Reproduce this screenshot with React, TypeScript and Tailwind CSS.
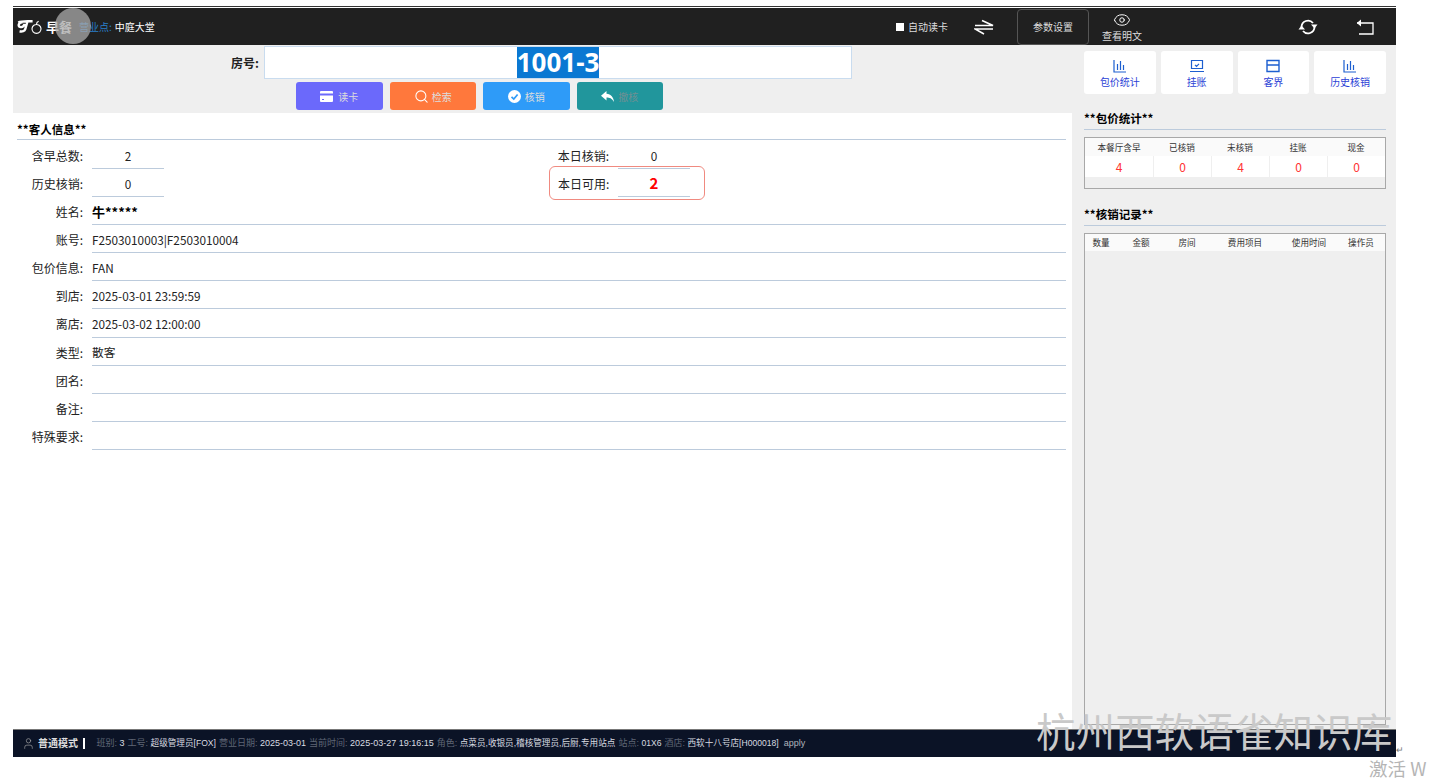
import { Eye, Search, User } from "lucide-react";

const font = "font-['Noto_Sans_CJK_SC','Noto_Sans',sans-serif]";

const infoRows = [
  { label: "账号:", value: "F2503010003|F2503010004" },
  { label: "包价信息:", value: "FAN" },
  { label: "到店:", value: "2025-03-01 23:59:59" },
  { label: "离店:", value: "2025-03-02 12:00:00" },
  { label: "类型:", value: "散客" },
  { label: "团名:", value: "" },
  { label: "备注:", value: "" },
  { label: "特殊要求:", value: "" },
];

const statusItems = [
  ["班别:", "3"],
  ["工号:", "超级管理员[FOX]"],
  ["营业日期:", "2025-03-01"],
  ["当前时间:", "2025-03-27 19:16:15"],
  ["角色:", "点菜员,收银员,稽核管理员,后厨,专用站点"],
  ["站点:", "01X6"],
  ["酒店:", "西软十八号店[H000018]"],
];

const BarsIcon = () => (
  <svg width="14" height="14" viewBox="0 0 14 14" fill="none" stroke="#1d5fd0" strokeWidth="1.2">
    <path d="M1 1v12h12M4.5 5v6M7.5 2v9M10.5 6v5" />
  </svg>
);

const LaptopIcon = () => (
  <svg width="16" height="14" viewBox="0 0 16 14" fill="none" stroke="#1d5fd0" strokeWidth="1.2">
    <path d="M2.5 1.5h11v8h-11zM1 12.5h14M6 5.8l1.5 1.5 2.5-2.5" />
  </svg>
);

const WindowIcon = () => (
  <svg width="14" height="14" viewBox="0 0 14 14" fill="none" stroke="#1d5fd0" strokeWidth="1.4">
    <path d="M1 1.5h12v11H1zM1 6h12" />
  </svg>
);

const tools = [
  { label: "包价统计", icon: <BarsIcon /> },
  { label: "挂账", icon: <LaptopIcon /> },
  { label: "客界", icon: <WindowIcon /> },
  { label: "历史核销", icon: <BarsIcon /> },
];

const stats = [
  { label: "本餐厅含早", value: "4" },
  { label: "已核销", value: "0" },
  { label: "未核销", value: "4" },
  { label: "挂账", value: "0" },
  { label: "现金", value: "0" },
];

const Logo = () => (
  <svg width="26" height="15" viewBox="0 0 30 16" fill="none" stroke="white">
    <path d="M1.500 3.500c4-2.200 10-1.500 16.500-1.500M6.500 3C2 3 .5 7.500 3.500 8.500c2.500.8 4.500-1 5.500-3.500M12 2.500 9.500 11c-.6 2.200-3.500 3.200-6.500 2.500" strokeWidth="2.800" />
    <path d="M19.500 6.500a5.200 5.200 0 1 0 6 0c-1.500-.8-4.500-.8-6 0zM22.500 5.500c0-2 1-3 2.500-3.500" strokeWidth="1.300" />
  </svg>
);

const SwapIcon = () => (
  <svg width="20" height="16" viewBox="0 0 20 16" fill="none" stroke="white" strokeWidth="1.600">
    <path d="M1 6.500h18L8 1.500M19 10H1l9 5" />
  </svg>
);

const RefreshIcon = () => (
  <svg width="20" height="18" viewBox="0 0 20 18" fill="none" stroke="white" strokeWidth="1.800">
    <path d="M3.500 9a6.500 6.500 0 0 1 11.500-4M16.500 9a6.500 6.500 0 0 1-11.500 4" />
    <path d="M13 6.500h6.500L16.500 10.500zM.5 11.500H7L3.500 7.500z" fill="white" stroke="none" />
  </svg>
);

const BackIcon = () => (
  <svg width="18" height="16" viewBox="0 0 18 16" fill="none" stroke="white" strokeWidth="1.300">
    <path d="M1 4h16v11H3" />
    <path d="M5 .5v7L.8 4z" fill="white" stroke="none" />
  </svg>
);

const CardIcon = () => (
  <svg width="13" height="11" viewBox="0 0 13 11" fill="white">
    <path d="M1 0h11a1 1 0 0 1 1 1v1.500H0V1a1 1 0 0 1 1-1zM0 4.500h13V10a1 1 0 0 1-1 1H1a1 1 0 0 1-1-1zM2 8v1h2V8z" fillRule="evenodd" />
  </svg>
);

const CheckIcon = () => (
  <svg width="13" height="13" viewBox="0 0 13 13">
    <circle cx="6.500" cy="6.500" r="6.500" fill="white" />
    <path d="M3.500 6.800 5.800 9l3.800-4.500" fill="none" stroke="#2e9bf8" strokeWidth="1.700" />
  </svg>
);

const ReplyIcon = () => (
  <svg width="13" height="11" viewBox="0 0 13 11" fill="white">
    <path d="M5.500 0 0 4.700 5.500 9.500V6.600c3 0 5.500.8 7.500 4.400-.5-4.800-3-8-7.500-8.300z" />
  </svg>
);

const SectionTitle = ({ children, className }: { children: string; className: string }) => (
  <div className={`border-b border-[#bccbdc] text-[11.5px] font-bold text-black ${className}`}>
    {children}
  </div>
);

const ShortRow = ({ label, value, width }: { label: string; value: string; width: string }) => (
  <div className="flex h-[28px] items-center">
    <span className={`${width} shrink-0 whitespace-nowrap pr-[9px] pt-[2px] text-right text-[12px] text-[#222]`}>{label}</span>
    <span className="flex h-[28px] w-[72px] items-center justify-center border-b border-[#bccbdc] pt-[2px] text-[11.75px] text-[#222]">
      {value}
    </span>
  </div>
);

const App = () => {
  return (
    <div className={`relative h-[779px] w-[1430px] overflow-hidden bg-white pl-[13px] pt-[6px] ${font}`}>
      <div className="flex h-[751px] w-[1383px] flex-col">
        <div className="h-[2px] shrink-0 border-b border-white bg-[#333]" />
        {/* header */}
        <header className="relative flex h-[37px] shrink-0 items-center bg-[#202020] pl-[4px] text-white">
          <Logo />
          <span className="ml-[3px] text-[13px] font-bold">早餐</span>
          <span className="ml-[7px] text-[10px] text-[#2a7fc9]">营业点:</span>
          <span className="ml-[3px] text-[10px]">中庭大堂</span>
          <div className="absolute left-[42px] top-[0px] h-[36px] w-[36px] rounded-full bg-[#aaa]/75" />
          <div className="ml-auto flex items-center">
            <span className="h-[8px] w-[8px] bg-white" />
            <span className="ml-[4px] text-[10px] text-[#ddd]">自动读卡</span>
            <span className="ml-[26px]"><SwapIcon /></span>
            <div className="ml-[23px] flex h-[36px] w-[72px] items-center justify-center rounded-[4px] border border-[#555] text-[10px] text-[#ddd]">
              参数设置
            </div>
            <div className="flex w-[66px] flex-col items-center">
              <Eye size={18} strokeWidth={1.3} />
              <span className="text-[10px] leading-[14px] text-[#ddd]">查看明文</span>
            </div>
            <span className="ml-[143px]"><RefreshIcon /></span>
            <span className="ml-[38px] mr-[22px]"><BackIcon /></span>
          </div>
        </header>

        <div className="flex min-h-0 flex-1 bg-[#efefef]">
          {/* left */}
          <div className="flex w-[1059px] shrink-0 flex-col">
            <div className="h-[68px] shrink-0 pt-[1px]">
              <div className="flex h-[33px] items-center">
                <span className="w-[251px] pr-[5px] text-right text-[12px] font-bold text-[#222]">房号:</span>
                <div className="flex h-[33px] w-[588px] items-center justify-center border border-[#c9dcef] bg-white">
                  <span className="bg-[#0a78d2] text-[26px] font-bold leading-[31px] text-white font-['Noto_Sans',sans-serif]">1001-3</span>
                </div>
              </div>
              <div className="mt-[3px] flex gap-[7px] pl-[283px]">
                <button className="flex h-[28px] w-[86.500px] items-center justify-center gap-[5px] rounded-[3px] bg-[#6b69fb] text-[10px] text-[#ddd]">
                  <CardIcon />读卡
                </button>
                <button className="flex h-[28px] w-[86.500px] items-center justify-center gap-[3px] rounded-[3px] bg-[#ff783c] text-[10px] text-[#ddd]">
                  <Search size={15} strokeWidth={1.7} color="white" />检索
                </button>
                <button className="flex h-[28px] w-[86.500px] items-center justify-center gap-[4px] rounded-[3px] bg-[#2e9bf8] text-[10px] text-[#ddd]">
                  <CheckIcon />核销
                </button>
                <button className="flex h-[28px] w-[86.500px] items-center justify-center gap-[4px] rounded-[3px] bg-[#21969c] text-[10px] text-[#6f8f93]">
                  <ReplyIcon />撤核
                </button>
              </div>
            </div>

            <div className="min-h-0 flex-1 bg-white pl-[4px] pr-[6px]">
              <SectionTitle className="flex h-[27px] items-end pb-[1px] leading-[18px]">**客人信息**</SectionTitle>
              <div className="mt-[1px] flex">
                <ShortRow label="含早总数:" value="2" width="w-[75px]" />
                <div className="ml-[385px] flex items-center">
                  <ShortRow label="本日核销:" value="0" width="w-[69px]" />
                </div>
              </div>
              <div className="flex h-[28px] items-center">
                <ShortRow label="历史核销:" value="0" width="w-[75px]" />
                <div className="ml-[385px] flex h-[34px] w-[156px] shrink-0 items-center rounded-[6px] border border-[#f08a80] pl-[8px]">
                  <span className="w-[60px] shrink-0 whitespace-nowrap pt-[1px] text-[12px] text-[#222]">本日可用:</span>
                  <span className="flex h-[28px] w-[72px] items-center justify-center border-b border-[#bccbdc] pt-[1px] text-[15px] font-bold text-[#f00]">2</span>
                </div>
              </div>
              <div className="flex h-[28px] items-center">
                <span className="w-[75px] shrink-0 pr-[9px] pt-[2px] text-right text-[12px] text-[#222]">姓名:</span>
                <span className="flex h-[28px] flex-1 items-center border-b border-[#bccbdc] pt-[2px] text-[13px] font-bold text-black">牛*****</span>
              </div>
              {infoRows.map((row) => (
                <div key={row.label} className="flex h-[28.125px] items-center">
                  <span className="w-[75px] shrink-0 pr-[9px] pt-[2px] text-right text-[12px] text-[#222]">{row.label}</span>
                  <span className="flex h-full flex-1 items-center border-b border-[#bccbdc] pt-[2px] text-[11.75px] text-[#222]">{row.value}</span>
                </div>
              ))}
            </div>
          </div>

          {/* right */}
          <aside className="flex min-w-0 flex-1 flex-col pl-[12px] pr-[10px] pt-[6px]">
            <div className="grid grid-cols-4 gap-[5px]">
              {tools.map((tool) => (
                <div key={tool.label} className="flex h-[43px] flex-col items-center justify-center rounded-[3px] bg-white pt-[2px]">
                  {tool.icon}
                  <span className="mt-[2px] text-[10px] leading-[13px] text-[#2b3fd6]">{tool.label}</span>
                </div>
              ))}
            </div>

            <SectionTitle className="mt-[8px] h-[28px] pt-[7px] leading-[18px]">**包价统计**</SectionTitle>
            <div className="mt-[7px] h-[52px] border border-[#a8a8a8] bg-[#efefef]">
              <div className="grid h-[18px] grid-cols-[68px_repeat(4,1fr)] items-center bg-[#fafafa] text-center text-[8.600px] text-[#333]">
                {stats.map((s) => <span key={s.label}>{s.label}</span>)}
              </div>
              <div className="grid h-[21px] grid-cols-[68px_repeat(4,1fr)] gap-[1px] text-center">
                {stats.map((s) => (
                  <span key={s.label} className="bg-white text-[12px] leading-[21px] text-[#f33]">{s.value}</span>
                ))}
              </div>
            </div>

            <SectionTitle className="mt-[16px] h-[21px] leading-[18px]">**核销记录**</SectionTitle>
            <div className="mb-[4px] mt-[7px] min-h-0 flex-1 border border-[#a8a8a8]">
              <div className="grid h-[17px] grid-cols-[32px_48px_44px_72px_56px_1fr] items-center bg-[#fafafa] text-center text-[8.600px] text-[#333]">
                <span>数量</span>
                <span>金额</span>
                <span>房间</span>
                <span>费用项目</span>
                <span>使用时间</span>
                <span>操作员</span>
              </div>
            </div>
          </aside>
        </div>

        {/* status bar */}
        <footer className="flex h-[28px] shrink-0 items-center whitespace-nowrap border-t border-[#777] bg-[#0b1326] pl-[9px] text-[9px] font-['Liberation_Sans','Noto_Sans_CJK_SC',sans-serif]">
          <User size={13} strokeWidth={1.200} color="#aaa" />
          <span className="ml-[3px] text-[10px] font-bold text-[#ddd]">普通模式</span>
          <span className="ml-[5px] mr-[12px] h-[11px] w-[1.500px] bg-white" />
          {statusItems.map(([name, value]) => (
            <span key={name} className="mr-[3px]">
              <span className="text-[#5f6675]">{name} </span>
              <span className={`text-[#d8dbe0] ${/^[\d\- :]+$/.test(value) ? "text-[9px]" : "text-[8.600px]"}`}>{value}</span>
            </span>
          ))}
          <span className="ml-[2px] text-[#b0b4bc]">apply</span>
        </footer>
      </div>

      {/* pasted watermark */}
      <div className="absolute left-[1036px] top-[707px] whitespace-nowrap text-[39.600px] leading-[46px] text-[#c9c9c9]">
        杭州西软语雀知识库
      </div>
      <div className="absolute left-[1396px] top-[745px] text-[9px] leading-[10px] text-[#777]">↵</div>
      <div className="absolute left-[1369px] top-[757px] whitespace-nowrap text-[18.500px] leading-[22px] text-[#b5b5b5]">激活 W</div>
    </div>
  );
};

export default App;
